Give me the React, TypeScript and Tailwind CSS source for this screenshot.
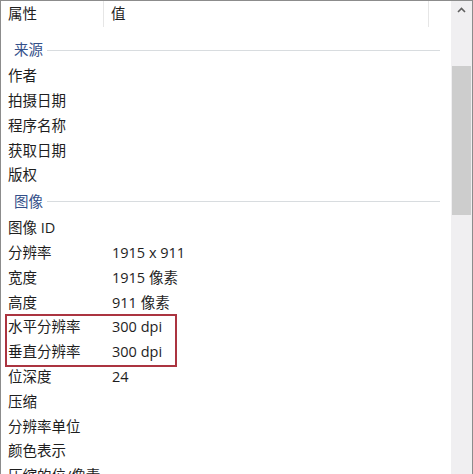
import React from 'react';

type Row = { label: string; value?: string; group?: boolean };

const rows: Row[] = [
  { label: '来源', group: true },
  { label: '作者' },
  { label: '拍摄日期' },
  { label: '程序名称' },
  { label: '获取日期' },
  { label: '版权' },
  { label: '图像', group: true },
  { label: '图像 ID' },
  { label: '分辨率', value: '1915 x 911' },
  { label: '宽度', value: '1915 像素' },
  { label: '高度', value: '911 像素' },
  { label: '水平分辨率', value: '300 dpi' },
  { label: '垂直分辨率', value: '300 dpi' },
  { label: '位深度', value: '24' },
  { label: '压缩' },
  { label: '分辨率单位' },
  { label: '颜色表示' },
  { label: '压缩的位/像素' },
];

function GroupRow({ label }: { label: string }) {
  return (
    <div className="h-[28px] flex items-center pl-[13px] pr-[11px]">
      <span className="text-[#34508a]">{label}</span>
      <div className="flex-1 h-px bg-[#d8dcdf] ml-[4px]" />
    </div>
  );
}

function PropRow({ label, value }: Row) {
  return (
    <div className="h-[24.8px] flex items-center text-[#1e1e1e]">
      <div className="w-[111px] pl-[7px] shrink-0 whitespace-nowrap">{label}</div>
      <div className="whitespace-nowrap">{value}</div>
    </div>
  );
}

export default function App() {
  const highlighted = ['水平分辨率', '垂直分辨率'];
  const start = rows.findIndex((x) => x.label === '水平分辨率');
  const end = rows.findIndex((x) => x.label === '垂直分辨率');
  const before = rows.slice(0, start);
  const after = rows.slice(end + 1);

  return (
    <div
      className="w-[473px] h-[474px] bg-white border-t border-l border-r border-[#8c8c8c] flex overflow-hidden text-[14.5px] leading-none"
      style={{ fontFamily: '"Open Sans", "Noto Sans CJK SC", sans-serif' }}
    >
      <div className="flex-1 flex flex-col overflow-hidden">
        <div className="h-[26px] flex shrink-0 text-[#1e1e1e] bg-white">
          <div className="w-[103px] pl-[7px] flex items-center border-r border-[#e6e6e6]">属性</div>
          <div className="w-[325px] pl-[7px] flex items-center border-r border-[#e6e6e6]">值</div>
          <div className="flex-1" />
        </div>
        <div className="flex-1 overflow-hidden">
          {/* previous row, scrolled almost out of view */}
          <div className="h-[9px] overflow-hidden">
            <div className="mt-[-19px]">
              <PropRow label="备注" />
            </div>
          </div>
          {before.map((r) =>
            r.group ? <GroupRow key={r.label} label={r.label} /> : <PropRow key={r.label} {...r} />
          )}
          <div className="relative">
            {rows
              .filter((r) => highlighted.includes(r.label))
              .map((r) => (
                <PropRow key={r.label} {...r} />
              ))}
            <div className="absolute left-[4px] w-[172px] top-[-1px] bottom-[-2px] border-2 border-[#ab3440]" />
          </div>
          {after.map((r) =>
            r.group ? <GroupRow key={r.label} label={r.label} /> : <PropRow key={r.label} {...r} />
          )}
        </div>
      </div>
      <div className="w-[21px] shrink-0 bg-[#f0eff1] flex flex-col">
        <div className="h-[18px] flex items-center justify-center">
          <svg width="9" height="6" viewBox="0 0 9 6">
            <path d="M1 5 L4.5 1.5 L8 5" fill="none" stroke="#606060" strokeWidth="1.6" />
          </svg>
        </div>
        <div className="mt-[47px] h-[149px] mx-[1px] bg-[#cdcdcd]" />
      </div>
    </div>
  );
}
